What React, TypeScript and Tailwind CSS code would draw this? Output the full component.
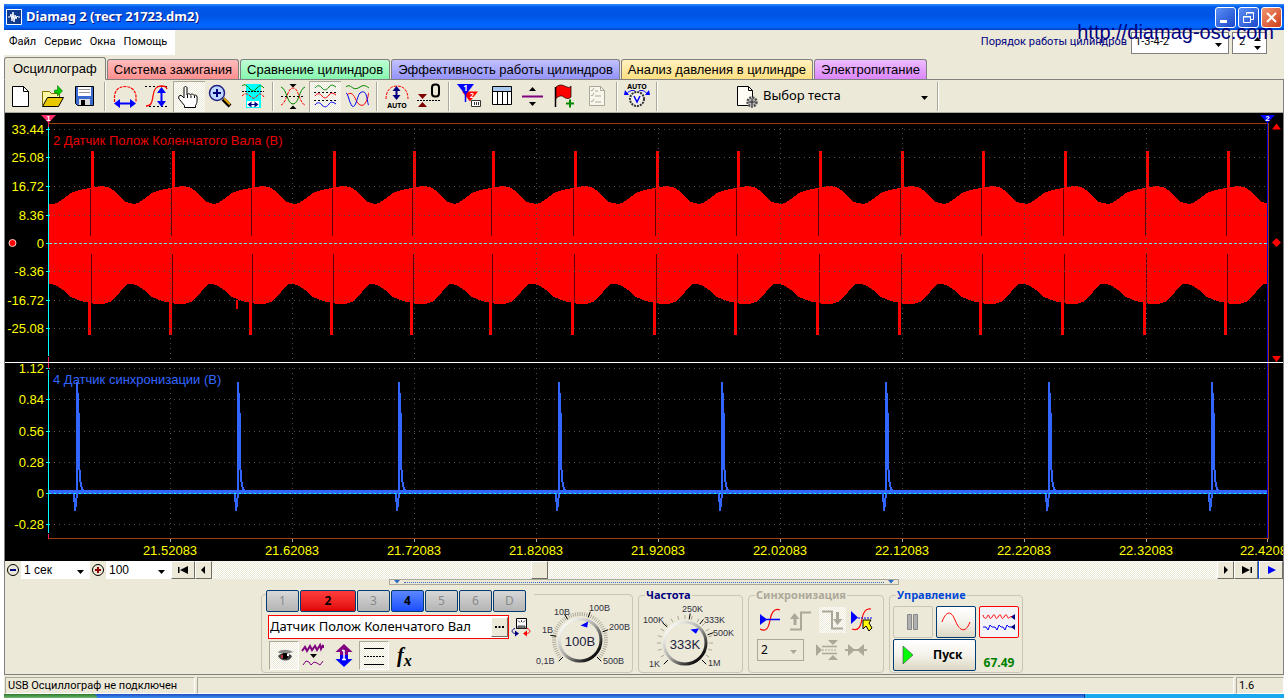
import { useState } from "react";
import type { ReactNode } from "react";
import clsx from "clsx";

const CHECKER = "bg-[repeating-conic-gradient(#fff_0_25%,#ece9d8_0_50%)] bg-[length:2px_2px]";
const SUNKEN = "border border-t-[#aca899] border-l-[#aca899] border-r-white border-b-white";
const RAISED = "border border-t-white border-l-white border-r-[#716f64] border-b-[#716f64] bg-[#ece9d8]";

const TABS = [
  { name: "Осциллограф", look: "" },
  { name: "Система зажигания", look: "bg-linear-to-b from-[#ffbcbc] to-[#ff8f8f]" },
  { name: "Сравнение цилиндров", look: "bg-linear-to-b from-[#bcffd4] to-[#86f7ae]" },
  { name: "Эффективность работы цилиндров", look: "bg-linear-to-b from-[#c2c2ff] to-[#9492fb]" },
  { name: "Анализ давления в цилиндре", look: "bg-linear-to-b from-[#fff0bd] to-[#ffdf80]" },
  { name: "Электропитание", look: "bg-linear-to-b from-[#edbcff] to-[#dc86fb]" },
];

/* ---------- small shared pieces ---------- */

function Glyph({ children, w = 32, h = 30 }: { children: ReactNode; w?: number; h?: number }) {
  return (
    <svg width={w} height={h} viewBox={`0 0 ${w} ${h}`} fill="none" className="block shrink-0" aria-hidden="true">
      {children}
    </svg>
  );
}

function Tool({ label, pressed, children }: { label: string; pressed?: boolean; children: ReactNode }) {
  return (
    <button
      type="button"
      aria-label={label}
      className={clsx("h-[31px] w-8 shrink-0", pressed && CHECKER, pressed && "shadow-[inset_1px_1px_#aca899]")}
    >
      <Glyph>{children}</Glyph>
    </button>
  );
}

function Sep() {
  return (
    <div className="flex h-[31px] w-2 shrink-0 justify-center py-px">
      <span className="w-0.5 border-l border-[#aca899] border-r border-r-white" />
    </div>
  );
}

type SelectProps = { label: string; value: string; className: string; arrow?: string; disabled?: boolean };

function Select({ label, value, className, arrow = "#000", disabled }: SelectProps) {
  return (
    <div className={clsx("relative shrink-0", className)}>
      <select
        aria-label={label}
        disabled={disabled}
        defaultValue={value}
        className="size-full appearance-none bg-transparent pl-[3px] outline-none"
      >
        <option>{value}</option>
      </select>
      <svg viewBox="0 0 7 4" className="pointer-events-none absolute top-1/2 right-1.5 h-1 w-[7px]" fill={arrow} aria-hidden="true">
        <path d="M0 0h7L3.5 4z" />
      </svg>
    </div>
  );
}

/* ---------- title bar and menu ---------- */

function TitleBar() {
  const box = "flex size-[21px] items-center justify-center rounded-[3px] border border-white";
  return (
    <header className="flex h-[26px] items-center bg-[linear-gradient(#2f8dff_0,#0058e8_12%,#0054e3_45%,#0066ff_80%,#0062f5_90%,#003fc0_100%)] pr-0.5 pl-0.5">
      <svg width="16" height="16" viewBox="0 0 16 16" fill="none" aria-hidden="true">
        <path d="M.5.500h15v15H.500z" fill="#123a8c" stroke="#fff" />
        <path d="M2 8h2l1-3 1 7 1-9 1 10 1-7 1 4 1-3 1 1h2" stroke="#fff" />
      </svg>
      <h1 className="ml-1 flex-1 text-[13px] font-bold text-white [text-shadow:1px_1px_#0a1883]">
        Diamag 2 (тест 21723.dm2)
      </h1>
      <div className="flex gap-0.5">
        <button type="button" aria-label="Свернуть" className={clsx(box, "bg-linear-to-br from-[#5c8ff7] to-[#1c46c8]")}>
          <Glyph w={19} h={19}><path d="M4 12h7v3H4z" fill="#fff" /></Glyph>
        </button>
        <button type="button" aria-label="Восстановить" className={clsx(box, "bg-linear-to-br from-[#5c8ff7] to-[#1c46c8]")}>
          <Glyph w={19} h={19}>
            <path d="M7.500 7V4.500h7v7H12M7 5h8M4.500 8.500h7v6h-7zM4 9h8" stroke="#fff" />
          </Glyph>
        </button>
        <button type="button" aria-label="Закрыть" className={clsx(box, "bg-linear-to-br from-[#f0946f] to-[#cf3a14]")}>
          <Glyph w={19} h={19}><path d="m5 5 9 9M14 5l-9 9" stroke="#fff" strokeWidth="2" /></Glyph>
        </button>
      </div>
    </header>
  );
}

function MenuRow() {
  return (
    <div className="flex h-[27px] items-start justify-between font-[Roboto,sans-serif] text-[11px]">
      <nav className="flex h-[25px] items-center gap-2 bg-white pr-2 pl-[5px]">
        {["Файл", "Сервис", "Окна", "Помощь"].map((item) => (
          <a key={item} href="#" onClick={(e) => e.preventDefault()}>{item}</a>
        ))}
      </nav>
      <div className="relative flex h-[25px] items-center pr-[17px]">
        <span className="mr-1 text-[#000080]">Порядок работы цилиндров</span>
        <Select label="Порядок работы цилиндров" value="1-3-4-2" className="h-[22px] w-[98px] border border-[#808080] bg-white" />
        <div className="ml-[3px] flex h-[22px] w-[35px] items-center border border-[#808080] bg-white">
          <input aria-label="Число" defaultValue="2" className="w-5 pl-1.5 outline-none" />
          <Glyph w={9} h={14}><path d="M1 5h7L4.500 1zM1 10h7l-3.500 4z" fill="#000" /></Glyph>
        </div>
        <a href="http://diamag-osc.com" className="absolute right-2.5 -top-3 font-['Liberation_Sans',sans-serif] text-xl text-[#000080]">
          http://diamag-osc.com
        </a>
      </div>
    </div>
  );
}

/* ---------- toolbar ---------- */

function Toolbar() {
  return (
    <div className="flex h-[33px] items-center overflow-hidden border-b border-b-[#aca899]">
      <Tool label="Новый">
        <path d="M7.500 5.500h11l5 5v15h-16z" fill="#fff" stroke="#000" />
        <path d="M18.500 5.500v5h5" stroke="#000" />
      </Tool>
      <Tool label="Открыть">
        <path d="M5.500 24.500v-14h7l2 2h8v4" fill="#fff6a0" stroke="#807000" />
        <path d="m5.500 25.500 5-9h16l-5 9z" fill="#e8c800" stroke="#000" />
        <path d="M17.500 12V9h3V4.500l5 5.500-5 5V12z" fill="#0c0" stroke="#006000" strokeWidth=".5" />
      </Tool>
      <Tool label="Сохранить">
        <path d="M6.500 5.500h18v19h-16l-2-2z" fill="#3a6ad0" stroke="#000" />
        <path d="M9 6h13v9H9z" fill="#fff" />
        <path d="M10 8.500h11M10 11.500h11" stroke="#999" />
        <path d="M10 18h11v6H10z" fill="#ddd" />
        <path d="M12 19h4v5h-4z" fill="#000" />
      </Tool>
      <Sep />
      <Tool label="Масштаб по горизонтали">
        <path d="M5.500 21v-5c0-7 5-10.500 10.500-10.500S27 9 27 16v5" stroke="red" strokeWidth="1.200" strokeDasharray="3 1" />
        <path d="M10 22.500h12" stroke="#00f" strokeWidth="2" />
        <path d="m5 22.500 6-4.500v9zM27 22.500l-6-4.500v9z" fill="#00f" />
      </Tool>
      <Tool label="Масштаб по вертикали">
        <path d="M4 5.500h22M8 25.500h18" stroke="#000" strokeDasharray="2 2" />
        <path d="M5 25c5 0 6-3 7-10s3-10 8-10 5 1 6 3" stroke="red" strokeWidth="1.300" />
        <path d="M20.500 10v13" stroke="#00f" strokeWidth="2" />
        <path d="m20.500 6 4.500 6h-9zM20.500 26l4.500-6h-9z" fill="#00f" />
      </Tool>
      <Tool label="Рука" pressed>
        <path
          d="M11.500 26.500v-2l-5-6c-1.500-2-1-3.500.500-4s2.500 1 4 2.500v-10c0-2 3-2 3 0v7c1-2 3-1.500 3.500 0 1-1.500 3-1 3.500.500 1-1 3-.500 3 1.500.500 5-.500 7-1.500 8.500v2z"
          fill="#fff"
          stroke="#000"
        />
        <path d="M14.500 14v3M18 14.500V17M21.500 15v2" stroke="#000" />
      </Tool>
      <Tool label="Лупа">
        <path d="m18 18 7 7" stroke="#000" strokeWidth="4" />
        <path d="m19 17.500 6 6" stroke="#e0a000" strokeWidth="2" />
        <circle cx="12" cy="12" r="7.500" fill="#bcd8ff" stroke="#202080" strokeWidth="1.500" />
        <path d="M8 12h8M12 8v8" stroke="#000080" strokeWidth="2" />
      </Tool>
      <Tool label="Участок">
        <path d="M9 3h15v24H9z" fill="#0ff" />
        <path d="M10 20h12v6H10z" fill="#fff" />
        <path d="M5 5c3-3 5 0 8 3s4 2 7-1 4-3 7 0" stroke="#080" />
        <path d="M5 10.500h22" stroke="#000" strokeDasharray="2 1" />
        <path d="M5 15c3-3 5-3 8 0s4 3 7 0 4-3 7 1" stroke="red" strokeDasharray="3 1" />
        <path d="M12 23.500h8" stroke="#000080" />
        <path d="m10.500 23.500 4-3v6zM21.500 23.500l-4-3v6z" fill="#000080" />
      </Tool>
      <Sep />
      <Tool label="Совместить">
        <path d="M4 24c6-2 6-17 12-17s6 15 12 17" stroke="red" strokeDasharray="3 1" />
        <path d="M4 6c6 2 6 17 12 17S22 8 28 6" stroke="#080" />
        <path d="M4 15.500h24" stroke="#000" strokeDasharray="2 2" />
        <path d="M12.500 3h7L16 6.500zM12.500 28h7L16 24.500z" fill="#000" />
      </Tool>
      <Tool label="Разделить" pressed>
        <path d="M6 7c2-3 5-3 7 0s5 2 7-1 4-2 7 0" stroke="#080" />
        <path d="M6 15c2-3 5-3 7 0s5 2 7-1 4-2 7 0" stroke="red" />
        <path d="M6 24c2-3 5-3 7 0s5 2 7-1 4-2 7 0" stroke="#00f" />
        <path d="M5 11.500h23M5 19.500h23" stroke="#000" strokeDasharray="2 2" />
      </Tool>
      <Tool label="Наложить">
        <path d="M5 6c3-3 5 0 7 1s4 1 7-1 5-2 9 1" stroke="#080" />
        <path d="M6 14c4-4 7 0 9 5s7 8 10 2 2-9 3-9" stroke="red" />
        <path d="M5 12c2 0 3 9 6 13 4 3 5-10 8-13 4-3 6 0 7 5s1 7 2 7" stroke="#00f" />
      </Tool>
      <Sep />
      <Tool label="Авто масштаб">
        <path d="M5 18c0-8 4-13 11-13s11 5 11 13" stroke="red" strokeDasharray="3 1" />
        <path d="M15.500 9v6" stroke="#000080" strokeWidth="2" />
        <path d="m15.500 5 4 5h-8zM15.500 19l4-5h-8z" fill="#000080" />
        <text x="16" y="26.500" textAnchor="middle" fontSize="7" fontWeight="bold" fill="#000">AUTO</text>
      </Tool>
      <Tool label="Ноль">
        <path d="M4 19.500h24" stroke="#000" strokeDasharray="2 1" />
        <path d="M5 13h9l-4.500 5zM5 26h9l-4.500-5z" fill="#800000" />
        <rect x="19" y="3.500" width="7" height="12" rx="3" stroke="#000" strokeWidth="2" />
      </Tool>
      <Sep />
      <Tool label="Маркеры">
        <path d="M9 10.500h16l-8 10z" fill="red" />
        <path d="M4 3h17l-8.500 11z" fill="#00f" />
        <path d="M12.500 3v18" stroke="#00f" strokeWidth="1.500" />
        <text x="12.500" y="10" textAnchor="middle" fontSize="8" fontWeight="bold" fill="#fff">1</text>
        <text x="19" y="17" textAnchor="middle" fontSize="7" fontWeight="bold" fill="#fff">2</text>
        <path d="M18.500 19.500h9v6h-9z" fill="#fff" stroke="#333" />
        <path d="M21.500 21v3M23.500 21v3M25.500 21v3" stroke="#333" />
      </Tool>
      <Tool label="Таблица">
        <path d="M7.500 5.500h19v18h-19z" fill="#fff" stroke="#000" />
        <path d="M8 6h18v4H8z" fill="#a8c8f0" />
        <path d="M7 10.500h20M12.500 10v13M17.500 10v13M22.500 10v13" stroke="#000" />
      </Tool>
      <Tool label="Линия">
        <path d="M5 15.500h21" stroke="#800080" strokeWidth="2" />
        <path d="M12 10h7l-3.500-4zM12 21h7l-3.500 4z" fill="#000" />
      </Tool>
      <Tool label="Добавить метку">
        <path d="M6.500 6v20" stroke="#000" strokeWidth="1.500" />
        <path d="M7 6c5-4 8-1 11 0s3 0 4-1v11c-3 3-6 1-8-.500s-5 0-7 2z" fill="red" stroke="#000" strokeWidth=".7" />
        <path d="M17 22.500h8M21 18.500v8" stroke="#080" strokeWidth="2" />
      </Tool>
      <Tool label="Отчёт">
        <path d="M8.500 5.500h11l4 4v15h-15z" fill="#f8f6ec" stroke="#aca899" />
        <path d="m10 9 1 1 2-3M10 14l1 1 2-3M10 20l1 1 2-3M14 10h3M14 15h6M14 21h6M19.500 5.500v4h4" stroke="#aca899" />
      </Tool>
      <Sep />
      <Tool label="Авто напряжение">
        <text x="16" y="8" textAnchor="middle" fontSize="7" fontWeight="bold" fill="#000">AUTO</text>
        <circle cx="16" cy="18" r="7" fill="#f4f2e8" stroke="#333" strokeWidth="2" strokeDasharray="2 1" />
        <path d="m13 15 3 6 3-6" stroke="#00f" strokeWidth="1.500" />
        <path d="M5 14c3-5 7-5 9-4M27 14c-3-5-7-5-9-4" stroke="#00f" />
        <path d="m3 14 1-5 4 5zM29 14l-1-5-4 5z" fill="#00f" />
      </Tool>
      <Sep />
      <div className="ml-[75px] flex items-center">
        <Glyph w={24} h={30}>
          <path d="M1.500 5.500h11l4 4v15h-15z" fill="#fffdf4" stroke="#000" />
          <path d="M12.500 5.500v4h4" stroke="#000" />
          <circle cx="16" cy="21" r="4.500" fill="#bbb" stroke="#555" strokeWidth="2.500" strokeDasharray="2 1" />
          <path d="M13 21h6M16 18v6" stroke="#222" />
        </Glyph>
        <Select label="Выбор теста" value="Выбор теста" className="h-[30px] w-[174px] text-[13px]" />
        <Sep />
      </div>
    </div>
  );
}

/* ---------- oscilloscope traces ---------- */

const GRID_X = [170, 292, 414, 536, 658, 780, 902, 1024, 1146, 1267];
const CRANK_ROWS: [number, string][] = [
  [129, "33.44"], [157, "25.08"], [186, "16.72"], [215, "8.36"], [243, "0"], [271, "-8.36"], [300, "-16.72"], [328, "-25.08"],
];
const SYNC_ROWS: [number, string][] = [
  [368, "1.12"], [399, "0.84"], [431, "0.56"], [462, "0.28"], [493, "0"], [524, "-0.28"],
];
const TEETH = [91, 172, 252, 333, 413, 492, 574, 656, 737, 819, 901, 982, 1064, 1146, 1227];
const SYNC_PULSES = [77, 238, 399, 559, 722, 886, 1049, 1212];

// envelope of one period, offsets from the missing tooth
const UPPER = [[-38, 204], [-34, 203], [-28, 199], [-20, 193], [-12, 190], [-2, 188], [4, 187], [10, 186], [17, 187], [24, 191], [30, 198], [35, 202]];
const LOWER = [[-40, 284], [-34, 286], [-28, 290], [-20, 297], [-10, 301], [-1, 303], [5, 304], [12, 304], [19, 302], [26, 296], [32, 288], [37, 284]];

const edge = (shape: number[][]) => TEETH.flatMap((t) => shape.map(([dx, y]) => `${t + dx} ${y}`));

const crankPath = `M49 284V204L${edge(UPPER).join("L")}L1268 204V284L${edge(LOWER).reverse().join("L")}Z`;
const syncPath = `M49 492${SYNC_PULSES.map(
  (x) => `H${x - 3}L${x - 2} 511L${x} 494V382L${x + 2} 423V459L${x + 3} 480L${x + 5} 489L${x + 9} 492`,
).join("")}H1267`;

function Scope() {
  return (
    <svg
      viewBox="5 113 1278 448"
      className="block h-auto w-full bg-black font-['Liberation_Sans',sans-serif] text-[13px]"
      role="img"
      aria-label="Осциллограмма"
    >
      <g fill="none" shapeRendering="crispEdges">
        <path d="M49 123.500H1268.500V538.500H49" stroke="#a03c10" />
        <path d={crankPath} fill="red" />
        {TEETH.map((x) => (
          <g key={x}>
            <path d={`M${x} 188V151H${x + 3}V188zM${x - 3} 300V335H${x}V300z`} fill="red" />
            <path d={`M${x - 0.5} 189V236M${x + 0.5} 254V303`} stroke="#600000" />
          </g>
        ))}
        <path d="M237 300V309" stroke="red" strokeWidth="2" />
        <path d={GRID_X.map((x) => `M${x + 0.5} 128V361M${x + 0.5} 368V538`).join("")} stroke="#505050" strokeDasharray="1 4" />
        <path d={[...CRANK_ROWS, ...SYNC_ROWS].map(([y]) => `M54 ${y + 0.5}H1267`).join("")} stroke="#505050" strokeDasharray="1 4" />
        <path d={GRID_X.map((x) => `M${x + 0.5} 539v3`).join("")} stroke="#aaa" />
        <path d="M49 243.500H1267" stroke="#70e8e8" strokeDasharray="3 2" />
        <path d={syncPath} stroke="#3366ff" strokeWidth="2" />
        <path d="M49 492H1267" stroke="#3366ff" strokeWidth="4" />
        <path d="M49 493.500H1267" stroke="#0ff" strokeDasharray="2 3" />
        <path d="M48.500 127V356M48.500 370V533" stroke="#0ff" />
        <path d={[...CRANK_ROWS, ...SYNC_ROWS].map(([y]) => `M46 ${y + 0.5}h4`).join("")} stroke="#0ff" />
        <path d="M48.500 118V127M48.500 357V369M48.500 534V539" stroke="#ff2060" />
        <path d="M1267.500 118V538" stroke="#0000e0" />
        <path d="M5 362.500H1283" stroke="#fff" />
      </g>
      <path d="M41 115h15l-7.500 8z" fill="#ff2a68" />
      <path d="M1260 115h15l-7.500 8z" fill="#00f" />
      <g fontSize="8" fontWeight="bold" fill="#fff" textAnchor="middle">
        <text x="48.500" y="121">1</text>
        <text x="1267.500" y="121">2</text>
      </g>
      <path d="M1272 129.500h9l-4.500-6zM1272 356h9l-4.500 6zM1276.500 238l4.500 4.500-4.500 4.500-4.500-4.500z" fill="red" />
      <circle cx="12.500" cy="243" r="3.500" fill="red" stroke="#fcc" />
      <g fill="#ff0" textAnchor="end">
        {[...CRANK_ROWS, ...SYNC_ROWS].map(([y, name]) => (
          <text key={y} x="44" y={y + 5}>{name}</text>
        ))}
      </g>
      <g fill="#ff0" textAnchor="middle">
        {GRID_X.map((x, i) => (
          <text key={x} x={x} y="555">{(21.52083 + i * 0.1).toFixed(5)}</text>
        ))}
      </g>
      <text x="53" y="145" fill="#e80000">2 Датчик Полож Коленчатого Вала (В)</text>
      <text x="53" y="384" fill="#3366ff">4 Датчик синхронизации (В)</text>
    </svg>
  );
}

/* ---------- time scale and scroll row ---------- */

function ScrollRow() {
  const [pos, setPos] = useState(323);
  const btn = clsx("flex h-[18px] shrink-0 items-center justify-center", RAISED);
  return (
    <div className="flex h-[18px] font-['Liberation_Sans',sans-serif] text-xs">
      <button type="button" aria-label="Уменьшить время" className="h-[18px] w-4">
        <Glyph w={16} h={18}>
          <circle cx="8" cy="9" r="5.500" stroke="#000" />
          <path d="M5 9h6" stroke="#000080" strokeWidth="2" />
        </Glyph>
      </button>
      <Select label="Время" value="1 сек" className="h-[18px] w-[69px] bg-white" />
      <button type="button" aria-label="Увеличить время" className="h-[18px] w-4">
        <Glyph w={16} h={18}>
          <circle cx="8" cy="9" r="5.500" stroke="#000" />
          <path d="M5 9h6M8 6v6" stroke="#900000" strokeWidth="2" />
        </Glyph>
      </button>
      <Select label="Масштаб" value="100" className="h-[18px] w-[65px] bg-white" />
      <button type="button" aria-label="В начало" className={clsx(btn, "w-6")}>
        <Glyph w={11} h={8}><path d="M0 1h1.500v6H0zM10 0v8L2 4z" fill="#000" /></Glyph>
      </button>
      <button type="button" aria-label="Назад" className={clsx(btn, "w-[17px]")}>
        <Glyph w={5} h={8}><path d="M4 0v8L0 4z" fill="#000" /></Glyph>
      </button>
      <input
        type="range"
        aria-label="Прокрутка"
        min={0}
        max={1000}
        value={pos}
        onChange={(e) => setPos(Number(e.target.value))}
        className={clsx(
          "h-[18px] min-w-0 flex-1 appearance-none [&::-webkit-slider-thumb]:h-[18px] [&::-webkit-slider-thumb]:w-[17px] [&::-webkit-slider-thumb]:appearance-none [&::-webkit-slider-thumb]:border [&::-webkit-slider-thumb]:border-t-white [&::-webkit-slider-thumb]:border-r-[#716f64] [&::-webkit-slider-thumb]:border-b-[#716f64] [&::-webkit-slider-thumb]:border-l-white [&::-webkit-slider-thumb]:bg-[#ece9d8]",
          CHECKER,
        )}
      />
      <button type="button" aria-label="Вперёд" className={clsx(btn, "w-[17px]")}>
        <Glyph w={5} h={8}><path d="M1 0v8l4-4z" fill="#000" /></Glyph>
      </button>
      <button type="button" aria-label="В конец" className={clsx(btn, "w-6")}>
        <Glyph w={11} h={8}><path d="M9.500 1H11v6H9.500zM1 0v8l8-4z" fill="#000" /></Glyph>
      </button>
      <span className="w-px bg-[#0a50e0]" />
      <button type="button" aria-label="Пуск просмотра" className={clsx(btn, "w-6")}>
        <Glyph w={9} h={8}><path d="M1 0v8l8-4z" fill="#00f" /></Glyph>
      </button>
    </div>
  );
}

/* ---------- bottom panel ---------- */

type DialProps = {
  cx: number;
  cy: number;
  value: string;
  ticks: number;
  marks: [string, number, number][];
  major: number[];
  pointer: number;
};

function Dial({ cx, cy, value, ticks, marks, major, pointer }: DialProps) {
  const ray = (deg: number, from: number, to: number) => {
    const a = ((deg - 90) * Math.PI) / 180;
    return `M${cx + from * Math.cos(a)} ${cy + from * Math.sin(a)}L${cx + to * Math.cos(a)} ${cy + to * Math.sin(a)}`;
  };
  const minor = Array.from({ length: ticks + 1 }, (_, i) => ray(-135 + (i * 270) / ticks, 24, 28)).join("");
  return (
    <svg width="98" height="76" viewBox="0 0 98 76" fill="none" className="block shrink-0 font-['Liberation_Sans',sans-serif]" role="img" aria-label={value}>
      <defs>
        <linearGradient id="rim" x1="0" y1="0" x2="1" y2="1">
          <stop offset=".15" stopColor="#f4f4f0" />
          <stop offset=".5" stopColor="#a8a8a4" />
          <stop offset=".85" stopColor="#101010" />
        </linearGradient>
      </defs>
      <path d={minor} stroke="#aca899" />
      <path d={major.map((d) => ray(d, 24, 30)).join("")} stroke="#000" />
      <circle cx={cx} cy={cy} r="21" fill="#ece9d8" stroke="url(#rim)" strokeWidth="3" />
      <path d="M-4-14h7l-1-6z" fill="#00f" transform={`translate(${cx} ${cy}) rotate(${pointer})`} />
      <text x={cx} y={cy + 6} textAnchor="middle" fontSize="13" fill="#202040">{value}</text>
      <g fontSize="9" fill="#303040">
        {marks.map(([name, x, y]) => (
          <text key={name} x={x} y={y}>{name}</text>
        ))}
      </g>
    </svg>
  );
}

function Group({ title, tone, className, children }: { title: string; tone: string; className: string; children: ReactNode }) {
  return (
    <fieldset className={clsx("h-[84px] rounded-[4px] border border-[#c9c6b6]", className)}>
      <legend className={clsx("ml-1.5 h-3 px-px text-[11px] leading-3 font-bold", tone)}>{title}</legend>
      {children}
    </fieldset>
  );
}

const CHANNELS = ["1", "2", "3", "4", "5", "6", "D"];

function ChannelButton({ name }: { name: string }) {
  return (
    <button
      type="button"
      className={clsx(
        "h-[22px] rounded-[2px] border border-[#003c74]",
        name === "2" && "w-14 bg-linear-to-b from-[#ff3b3b] to-[#e00000] font-bold text-black",
        name === "4" && "w-[33px] bg-linear-to-b from-[#5c86ff] to-[#1c4cff] font-bold text-black",
        name !== "2" && name !== "4" && "w-[33px] bg-linear-to-b from-[#d8d8d8] to-[#b4b4b4] text-[#8a8a8a]",
      )}
    >
      {name}
    </button>
  );
}

function ChannelPanel() {
  const tool = "h-[29px] w-[30px]";
  return (
    <section className="flex h-[79px] w-[372px] rounded-[4px] border border-[#c9c6b6]">
      <div className="-mt-[5px] w-[272px] shrink-0 pl-1">
        <div className="flex gap-px bg-[#ece9d8] text-xs">
          {CHANNELS.map((name) => <ChannelButton key={name} name={name} />)}
        </div>
        <div className="mt-[3px] ml-0.5 flex items-center">
          <div className="flex h-6 w-[241px] shrink-0 items-center border border-[#f00] bg-white">
            <input
              aria-label="Название канала"
              defaultValue="Датчик Полож Коленчатого Вал"
              className="min-w-0 flex-1 pl-px text-[13px] outline-none"
            />
            <button type="button" aria-label="Выбрать" className={clsx("flex h-5 w-[17px] items-center justify-center", RAISED)}>
              <Glyph w={9} h={3}><path d="M0 0h2v2H0zM3.500 0h2v2h-2zM7 0h2v2H7z" fill="#000" /></Glyph>
            </button>
          </div>
          <button type="button" aria-label="Датчик" className="ml-0.5">
            <Glyph w={20} h={20}>
              <path d="M5.500 1.500h10v10h-10z" fill="#fff" stroke="#000" />
              <path d="M7 9h7v2H7zM7 3.500l2 2M14 3.500l-2 2M10.500 3v2" fill="#999" stroke="#444" />
              <path d="M4 11.500c-4 1-4 5 1 5" stroke="#000080" />
              <path d="M16 11.500c4 1 4 5-1 5" stroke="red" />
              <path d="M4 13.500v6l4-3z" fill="#000080" />
              <path d="M16 13.500v6l-4-3z" fill="red" />
            </Glyph>
          </button>
        </div>
        <div className="mt-0.5 ml-[3px] flex">
          <button type="button" aria-label="Видимость" className={clsx(tool, CHECKER, SUNKEN)}>
            <Glyph w={28} h={27}>
              <path d="M8 10c3-3 10-3 15 0l-3 1h-11z" fill="#8a8a8a" />
              <path d="M8 14c3-4 10-4 14 0-2 6-11 6-14 0z" fill="#444" />
              <circle cx="15" cy="14" r="3" fill="#000" />
              <path d="M11 13h2v3h-2z" fill="#c03030" />
              <path d="M17 12h2v2h-2z" fill="#fff" />
            </Glyph>
          </button>
          <button type="button" aria-label="Фильтр" className={tool}>
            <Glyph w={30} h={29}>
              <path d="m3 10 3-4 2 4 3-5 2 4 3-4 2 4 3-5 1 4 2-4v3" stroke="#800080" strokeWidth="2" />
              <path d="M11 13h7l-3.500 4z" fill="#000" />
              <path d="m4 24 3-4 3 1 2 3 3-3 3 1 3 2 3-4" stroke="#800080" />
            </Glyph>
          </button>
          <button type="button" aria-label="Инверсия" className={tool}>
            <Glyph w={30} h={29}>
              <path d="M15 3l8.500 8H19v4h-8v-4H6.500z" fill="#800080" />
              <path d="M15 26l8.500-8H19v-4h-8v4H6.500z" fill="#00f" />
              <path d="M15 9v9M13 9.500h2M13 18.500h4" stroke="#fff" strokeWidth="1.500" />
            </Glyph>
          </button>
          <button type="button" aria-label="Линии" className={clsx(tool, CHECKER, SUNKEN)}>
            <Glyph w={28} h={27}>
              <path d="M4 6.500h20M4 22.500h20" stroke="#000" />
              <path d="M4 14.500h20" stroke="#000" strokeDasharray="2 1" />
            </Glyph>
          </button>
          <button type="button" aria-label="Функция" className={clsx(tool, "pl-2 text-left font-['Liberation_Serif',serif] text-xl leading-6 font-bold italic")}>
            f<sub className="text-base">x</sub>
          </button>
        </div>
      </div>
      <div className="mt-[3px]">
        <Dial
          cx={46}
          cy={42}
          value="100В"
          ticks={54}
          pointer={18}
          major={[-135, -81, -31, 20, 70, 135]}
          marks={[["0,1В", 2, 66], ["1В", 8, 35], ["10В", 20, 17], ["100В", 55, 13], ["200В", 75, 32], ["500В", 69, 66]]}
        />
      </div>
    </section>
  );
}

function SyncPanel() {
  return (
    <Group title="Синхронизация" tone="text-[#aca899]" className="w-[136px]">
      <div className="mt-1 flex pl-2.5">
        <button type="button" aria-label="Уровень" className="w-[30px]">
          <Glyph w={30} h={30}>
            <path d="M1 24c7 4 9-3 10-9S15 2 21 5" stroke="red" strokeWidth="1.200" />
            <path d="M2 14.500h19" stroke="#00f" strokeWidth="1.500" />
            <path d="M1 9v11l7-5.500z" fill="#00f" />
          </Glyph>
        </button>
        <button type="button" disabled aria-label="Фронт" className="w-[30px]">
          <Glyph w={30} h={30}>
            <path d="M1 24.500h11v-17h10" stroke="#aca899" strokeWidth="2" />
            <path d="m5.500 8 5 6H7.500v6h-3v-6H1z" fill="#aca899" />
          </Glyph>
        </button>
        <button type="button" disabled aria-label="Спад" className={clsx("h-[26px] w-[27px] self-center", CHECKER)}>
          <Glyph w={27} h={26}>
            <path d="M3 4.500h10v17h11" stroke="#aca899" strokeWidth="2" />
            <path d="m18.500 18 5-6H20V5h-3v7h-3z" fill="#aca899" />
          </Glyph>
        </button>
        <button type="button" aria-label="Выбор уровня" className="ml-1">
          <Glyph w={26} h={30}>
            <path d="M2 24c7 3 9-4 10-10S15 3 21 4" stroke="red" strokeWidth="1.200" />
            <path d="M2 13h20" stroke="#00f" strokeDasharray="2 1" />
            <path d="M1 6v13l7-6.500z" fill="#00f" />
            <path d="M13 15h8l-2 3 3 5-3 3-3-5-3 3z" fill="#ff0" stroke="#000" />
          </Glyph>
        </button>
      </div>
      <div className="mt-1 flex items-center gap-[11px] pl-2">
        <Select
          label="Канал синхронизации"
          value="2"
          disabled
          arrow="#aca899"
          className="h-[22px] w-[47px] border border-[#aca899] text-xs"
        />
        <button type="button" disabled aria-label="Гистерезис">
          <Glyph w={24} h={22}>
            <path d="M1 5v12l6-6zM13 1h10l-5 5zM13 21h10l-5-5z" fill="#aca899" />
            <path d="M7 7.500h15M7 14.500h15" stroke="#aca899" strokeWidth="1.500" />
            <path d="M7 11h15" stroke="#aca899" strokeDasharray="2 1" />
          </Glyph>
        </button>
        <button type="button" disabled aria-label="Сдвиг" className="-ml-1.5">
          <Glyph w={24} h={22}>
            <path d="M1 11h22" stroke="#aca899" strokeWidth="2" />
            <path d="M4 5l7 6-7 6zM20 5l-7 6 7 6z" fill="#aca899" />
          </Glyph>
        </button>
      </div>
    </Group>
  );
}

function RunPanel() {
  const xp = "rounded-[2px] border border-[#003c74] bg-linear-to-b from-white via-[#f4f2ea] to-[#dcd8c4]";
  return (
    <Group title="Управление" tone="text-[#0046d5]" className="w-[134px]">
      <div className="mt-[5px] grid grid-cols-[40px_40px_40px] gap-x-[3px] gap-y-px pl-[3px]">
        <button type="button" disabled aria-label="Пауза" className="flex h-8 items-center justify-center rounded-[2px] border border-[#c9c6b6]">
          <Glyph w={12} h={16}><path d="M.5.500h4v15h-4zM6.500.500h4v15h-4z" fill="#b0b0b0" stroke="#888" /></Glyph>
        </button>
        <button type="button" aria-label="Однократно" className={clsx("flex h-8 items-center justify-center", xp)}>
          <Glyph w={30} h={22}><path d="M1 11C5 0 10-1 14 9s10 15 15 2" stroke="red" /></Glyph>
        </button>
        <button type="button" aria-label="Непрерывно" className="flex h-8 items-center justify-center rounded-[2px] border border-[#f00] bg-[#f4f4f8]">
          <Glyph w={34} h={22}>
            <path d="M1 4c1 4 3 4 4 2s1-3 2-1 1 4 3 1 2-3 3-1 1 4 3 1 2-3 3-1 1 4 3 1 2-3 3-1 1 3 3 1l3-1" stroke="red" />
            <path d="M1 16h3l2 3 2-5 2 2h3l2 3 2-5 2 2h2l2 3 2-5 2 2h4" stroke="#00f" />
            <path d="M33 3v6l-4-3zM33 13v6l-4-3z" fill="#000080" />
          </Glyph>
        </button>
        <button type="button" className={clsx("col-span-2 flex h-8 items-center pl-2 text-xs font-bold", xp)}>
          <Glyph w={12} h={20}><path d="M1 1v18l10-9z" fill="#0f0" stroke="#555" strokeWidth=".7" /></Glyph>
          <span className="ml-[19px]">Пуск</span>
        </button>
        <output className="self-end text-center text-xs font-bold text-[#008000]">67.49</output>
      </div>
    </Group>
  );
}

function ControlPanel() {
  return (
    <div className="flex h-[95px] flex-col items-center">
      <div className="flex h-[6px] w-[510px] items-center justify-between border border-[#aca899] px-1">
        <Glyph w={6} h={4}><path d="M0 0h6L3 3.500z" fill="#316ac5" /></Glyph>
        <span className="mx-1 flex-1 border-t border-dotted border-[#316ac5]" />
        <Glyph w={6} h={4}><path d="M0 0h6L3 3.500z" fill="#316ac5" /></Glyph>
      </div>
      <div className="mt-1 mr-1 flex items-end gap-[5px]">
        <ChannelPanel />
        <Group title="Частота" tone="text-[#000080]" className="w-[105px]">
          <div className="-mt-1">
            <Dial
              cx={46}
              cy={46}
              value="333K"
              ticks={18}
              pointer={38}
              major={[-135, -48, 10, 38, 70, 135]}
              marks={[["1K", 10, 70], ["100K", 4, 26], ["250K", 43, 15], ["333K", 65, 26], ["500K", 74, 39], ["1M", 69, 69]]}
            />
          </div>
        </Group>
        <SyncPanel />
        <RunPanel />
      </div>
    </div>
  );
}

export default function App() {
  const [tab, setTab] = useState(0);
  return (
    <div className="bg-white px-1 pt-1 font-['Noto_Sans','Liberation_Sans',sans-serif] text-black">
      <div className="bg-[#ece9d8]">
        <TitleBar />
        <MenuRow />
        <div role="tablist" className="flex h-[22px] items-end gap-px font-['Liberation_Sans',sans-serif] text-[13px]">
          {TABS.map((t, i) => (
            <button
              key={t.name}
              type="button"
              role="tab"
              aria-selected={tab === i}
              onClick={() => setTab(i)}
              className={clsx(
                "shrink-0 rounded-t-[3px] border border-[#808080] whitespace-nowrap",
                tab === i ? "-mb-px h-[23px] border-b-[#ece9d8] px-2" : "h-5 border-b-0 px-1.5",
                t.look,
              )}
            >
              {t.name}
            </button>
          ))}
        </div>
        <main className="border border-[#808080]">
          <Toolbar />
          <Scope />
          <ScrollRow />
          <ControlPanel />
        </main>
        <footer className="flex gap-0.5 pt-0.5 pl-px font-[Roboto,sans-serif] text-[11px] leading-[15px]">
          <span className={clsx("h-[17px] w-[190px] pl-0.5", SUNKEN)}>USB Осциллограф не подключен</span>
          <span className={clsx("h-[17px] flex-1", SUNKEN)} />
          <span className={clsx("h-[17px] w-12 pl-0.5", SUNKEN)}>1.6</span>
        </footer>
      </div>
      <div className="flex h-1 bg-[linear-gradient(#1c4fc0,#3f8cf3)]">
        <span className="w-[93px] rounded-tr-sm bg-[linear-gradient(#2a7a2a,#6fb66f)]" />
        <span className="flex-1" />
        <span className="w-[200px] border-l border-[#0a3a90] bg-[#18a8ee]" />
      </div>
    </div>
  );
}
